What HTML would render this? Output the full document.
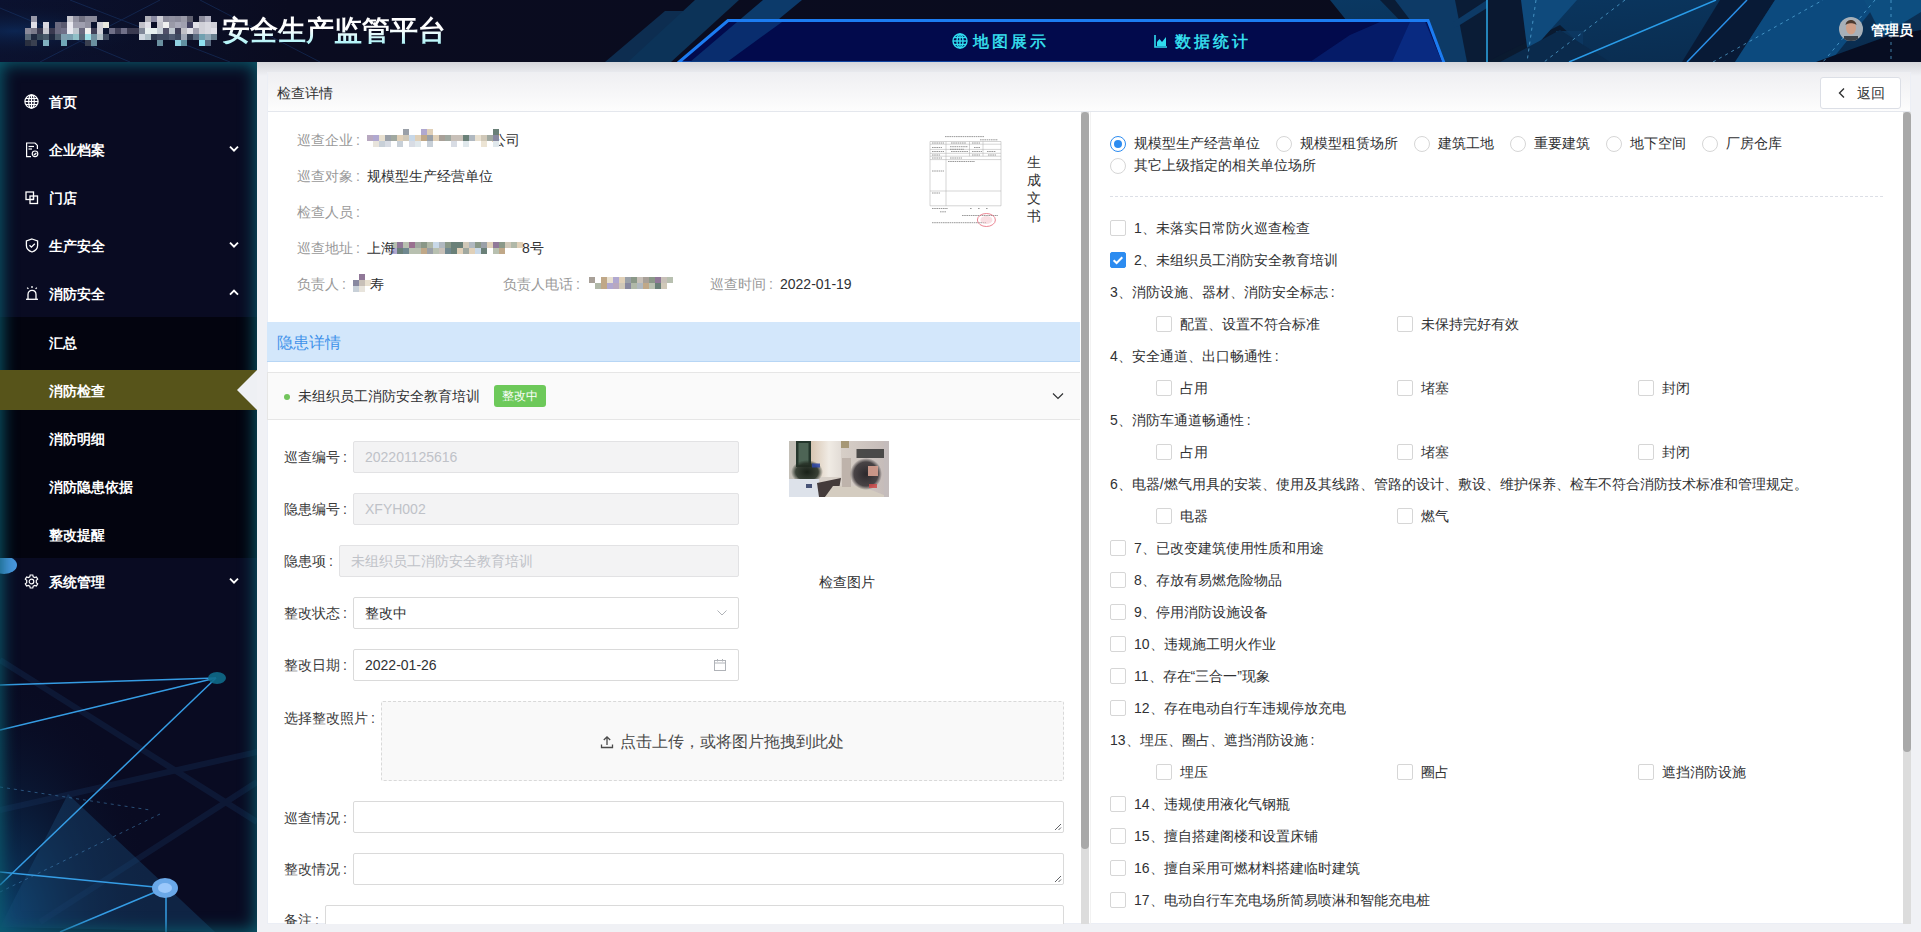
<!DOCTYPE html>
<html><head><meta charset="utf-8">
<style>
*{box-sizing:border-box;margin:0;padding:0}
html,body{width:1921px;height:932px;overflow:hidden;background:#f0f1f5;font-family:"Liberation Sans",sans-serif;font-size:14px;color:#303133}
.a{position:absolute}
#hdr{position:absolute;left:0;top:0;width:1921px;height:62px;background:#0a0c1f;overflow:hidden}
#side{position:absolute;left:0;top:62px;width:257px;height:870px;background:#090b22;overflow:hidden}
.mi{position:absolute;left:0;width:257px;height:40px;line-height:40px;color:#fff;font-size:14px;font-weight:bold}
.mi .t{position:absolute;left:49px;top:1px}
.mi svg{position:absolute}
#card{position:absolute;left:267px;top:72px;width:1644px;height:852px;background:#fff;border:1px solid #ebeef5;border-top-color:#eeeff2}
.lbl{position:absolute;color:#999;font-size:14px;line-height:20px;white-space:nowrap}
.val{position:absolute;color:#303133;font-size:14px;line-height:20px;white-space:nowrap}
.fl{position:absolute;color:#3a3a3a;font-size:14px;line-height:20px;white-space:nowrap}
.inp{position:absolute;height:32px;border:1px solid #dadada;border-radius:2px;background:#fff;font-size:14px;line-height:30px;padding-left:11px;color:#606266;white-space:nowrap}
.inp.dis{background:#f3f3f4;border-color:#e2e2e4;color:#bfc2c8}
.rt{position:absolute;font-size:14px;line-height:20px;color:#606266;white-space:nowrap}
.rd{position:absolute;width:14px;height:14px;border:1px solid #d6d6d6;border-radius:50%;background:#fff}
.cl{display:inline-block;width:14px;padding-left:3px;font-style:normal}
.cb{position:absolute;width:14px;height:14px;border:1px solid #d6d6d6;border-radius:2px;background:#fff}
</style></head><body>

<div id="hdr">
<svg class="a" style="left:0;top:0" width="1921" height="62" viewBox="0 0 1921 62">
 <defs>
  <linearGradient id="hg" x1="0" y1="0" x2="1" y2="0">
   <stop offset="0" stop-color="#0b1230"/><stop offset="0.15" stop-color="#0a0c20"/><stop offset="1" stop-color="#0a0c1c"/>
  </linearGradient>
  <linearGradient id="rg" x1="0" y1="0" x2="1" y2="1">
   <stop offset="0" stop-color="#0a3862"/><stop offset="1" stop-color="#0a2a4c"/>
  </linearGradient>
  <radialGradient id="lg" cx="0.05" cy="0.5" r="0.5">
   <stop offset="0" stop-color="#0c2a5a" stop-opacity="0.8"/><stop offset="1" stop-color="#0a0c20" stop-opacity="0"/>
  </radialGradient>
 </defs>
 <rect width="1921" height="62" fill="url(#hg)"/>
 <rect x="0" y="0" width="300" height="62" fill="url(#lg)"/>
 <g stroke="#1a3a70" stroke-width="1" opacity="0.5" fill="none">
  <line x1="0" y1="8" x2="130" y2="62"/><line x1="70" y1="0" x2="230" y2="62"/><line x1="160" y1="0" x2="40" y2="62"/><line x1="200" y1="0" x2="320" y2="62"/>
 </g>
 <!-- stripes left of nav -->
 <polygon points="605,62 665,11 704,11 645,62" fill="#0d2d50"/>
 <polygon points="628,62 695,0 739,0 671,62" fill="#0c3358"/>
 <polygon points="690,62 763,0 802,0 727,62" fill="#0c3a6a"/>
 <!-- right geometric -->
 <polygon points="1330,0 1921,0 1921,62 1380,62" fill="url(#rg)"/>
 <polygon points="1380,0 1487,0 1487,62 1440,62" fill="#0a1c36"/>
 <polygon points="1395,0 1455,0 1467,62 1442,62" fill="#0d3a66"/>
 <polygon points="1452,23 1487,0 1487,8 1455,28" fill="#0d3a66"/>
 <polygon points="1487,0 1525,0 1530,62 1487,62" fill="#0a1830"/>
 <polygon points="1487,62 1560,25 1600,62" fill="#0a1a30"/>
 <polygon points="1556,31 1583,31 1583,53 1556,53" fill="#0d3a64" opacity="0.8"/>
 <polygon points="1521,0 1577,0 1528,55" fill="#0f4a7c"/>
 <polygon points="1500,62 1560,30 1610,62" fill="#0a2a4c"/>
 <polygon points="1682,62 1720,0 1775,0 1735,62" fill="#081a36"/>
 <polygon points="1735,62 1775,0 1880,0 1830,62" fill="#0c4a7e"/>
 <polygon points="1816,62 1888,36 1921,30 1921,62" fill="#070d22"/>
 <polygon points="1864,0 1921,0 1921,12 1882,36" fill="#0d4e80"/>
 <line x1="1487" y1="0" x2="1487" y2="62" stroke="#2ea8e8" stroke-width="1.5"/>
 <line x1="1569" y1="62" x2="1716" y2="0" stroke="#2a9ce8" stroke-width="1.5"/>
 <line x1="1687" y1="62" x2="1747" y2="0" stroke="#2a8fe8" stroke-width="1.5"/>
 <g stroke="#5ab0e0" stroke-width="1" stroke-dasharray="3,4" opacity="0.7" fill="none">
  <line x1="1536" y1="0" x2="1527" y2="62"/><line x1="1625" y1="0" x2="1544" y2="62"/>
  <line x1="1713" y1="62" x2="1823" y2="0"/><line x1="1891" y1="0" x2="1891" y2="62"/><line x1="1875" y1="0" x2="1823" y2="62"/>
 </g>
 <!-- nav trapezoid -->
 <polygon points="678,63 728,20.5 1428,20.5 1444,63" fill="#020a4c" stroke="#1c7cf2" stroke-width="3"/>
 <polygon points="690,62 737,22 782,22 727,62" fill="#0c3a7a" opacity="0.75"/>
 <polygon points="1310,62 1350,35 1380,22 1426,22 1442,62" fill="#0a2a80" opacity="0.55"/>
 <polygon points="1392,62 1410,22 1425,22 1442,62" fill="#0e3a9a" opacity="0.5"/>
</svg>
<svg class="a" style="left:25px;top:16px" width="192" height="30" viewBox="0 0 192 30" shape-rendering="crispEdges"><rect x="6" y="0" width="6" height="6" fill="#9898a8"/><rect x="42" y="0" width="6" height="6" fill="#c8c8d0"/><rect x="48" y="0" width="6" height="6" fill="#9090a0"/><rect x="54" y="0" width="6" height="6" fill="#707080"/><rect x="60" y="0" width="6" height="6" fill="#8a8a9a"/><rect x="66" y="0" width="6" height="6" fill="#8a8a9a"/><rect x="120" y="0" width="6" height="6" fill="#b0b0b8"/><rect x="126" y="0" width="6" height="6" fill="#8888a0"/><rect x="132" y="0" width="6" height="6" fill="#d0d0d8"/><rect x="138" y="0" width="6" height="6" fill="#8a8a9a"/><rect x="144" y="0" width="6" height="6" fill="#9090a0"/><rect x="150" y="0" width="6" height="6" fill="#8a8a9a"/><rect x="156" y="0" width="6" height="6" fill="#9a9aa8"/><rect x="162" y="0" width="6" height="6" fill="#606070"/><rect x="174" y="0" width="6" height="6" fill="#8a8a9a"/><rect x="180" y="0" width="6" height="6" fill="#b0b0c0"/><rect x="6" y="6" width="6" height="6" fill="#e0e0e8"/><rect x="18" y="6" width="6" height="6" fill="#d8d8e0"/><rect x="30" y="6" width="6" height="6" fill="#6a6a80"/><rect x="36" y="6" width="6" height="6" fill="#5a5a70"/><rect x="42" y="6" width="6" height="6" fill="#e8e8f0"/><rect x="48" y="6" width="6" height="6" fill="#a0a0b0"/><rect x="54" y="6" width="6" height="6" fill="#a0a0b0"/><rect x="60" y="6" width="6" height="6" fill="#9090a0"/><rect x="72" y="6" width="6" height="6" fill="#d0d0d8"/><rect x="78" y="6" width="6" height="6" fill="#e8e8e0"/><rect x="114" y="6" width="6" height="6" fill="#c0c0c8"/><rect x="120" y="6" width="6" height="6" fill="#e0e0e8"/><rect x="132" y="6" width="6" height="6" fill="#c8c8d0"/><rect x="138" y="6" width="6" height="6" fill="#f0f0f0"/><rect x="144" y="6" width="6" height="6" fill="#9a9aa8"/><rect x="150" y="6" width="6" height="6" fill="#a8a8b8"/><rect x="156" y="6" width="6" height="6" fill="#a0a0b0"/><rect x="162" y="6" width="6" height="6" fill="#404060"/><rect x="168" y="6" width="6" height="6" fill="#e0e0e8"/><rect x="174" y="6" width="6" height="6" fill="#d0d0d8"/><rect x="180" y="6" width="6" height="6" fill="#d8d8e0"/><rect x="186" y="6" width="6" height="6" fill="#d0d0d8"/><rect x="0" y="12" width="6" height="6" fill="#8a8a9a"/><rect x="6" y="12" width="6" height="6" fill="#7a7a8a"/><rect x="12" y="12" width="6" height="6" fill="#3a3a50"/><rect x="18" y="12" width="6" height="6" fill="#c8c8d0"/><rect x="24" y="12" width="6" height="6" fill="#3a3a50"/><rect x="30" y="12" width="6" height="6" fill="#6a6a80"/><rect x="36" y="12" width="6" height="6" fill="#707088"/><rect x="42" y="12" width="6" height="6" fill="#e8e8f0"/><rect x="48" y="12" width="6" height="6" fill="#c0c8d0"/><rect x="54" y="12" width="6" height="6" fill="#6a6a80"/><rect x="60" y="12" width="6" height="6" fill="#f0f0f0"/><rect x="66" y="12" width="6" height="6" fill="#404058"/><rect x="72" y="12" width="6" height="6" fill="#d0d0d8"/><rect x="84" y="12" width="6" height="6" fill="#707088"/><rect x="90" y="12" width="6" height="6" fill="#404058"/><rect x="96" y="12" width="6" height="6" fill="#707088"/><rect x="102" y="12" width="6" height="6" fill="#3a3a50"/><rect x="108" y="12" width="6" height="6" fill="#3a3a50"/><rect x="114" y="12" width="6" height="6" fill="#808898"/><rect x="120" y="12" width="6" height="6" fill="#e8f0f0"/><rect x="126" y="12" width="6" height="6" fill="#e8f0f0"/><rect x="132" y="12" width="6" height="6" fill="#c8d0d8"/><rect x="138" y="12" width="6" height="6" fill="#505068"/><rect x="144" y="12" width="6" height="6" fill="#c0c8d0"/><rect x="150" y="12" width="6" height="6" fill="#404058"/><rect x="156" y="12" width="6" height="6" fill="#c0c0c8"/><rect x="162" y="12" width="6" height="6" fill="#e0e0e8"/><rect x="168" y="12" width="6" height="6" fill="#a0a0b0"/><rect x="174" y="12" width="6" height="6" fill="#d0d0d8"/><rect x="180" y="12" width="6" height="6" fill="#d8d8e0"/><rect x="186" y="12" width="6" height="6" fill="#e0e0e8"/><rect x="0" y="18" width="6" height="6" fill="#5a6a7a"/><rect x="6" y="18" width="6" height="6" fill="#202a40"/><rect x="12" y="18" width="6" height="6" fill="#3a4a5a"/><rect x="18" y="18" width="6" height="6" fill="#4a5a6a"/><rect x="24" y="18" width="6" height="6" fill="#202a40"/><rect x="30" y="18" width="6" height="6" fill="#4a5a6a"/><rect x="36" y="18" width="6" height="6" fill="#80a0b0"/><rect x="42" y="18" width="6" height="6" fill="#7aa0b0"/><rect x="48" y="18" width="6" height="6" fill="#90c0c8"/><rect x="54" y="18" width="6" height="6" fill="#5a6a7a"/><rect x="60" y="18" width="6" height="6" fill="#a0e0e8"/><rect x="66" y="18" width="6" height="6" fill="#7090a0"/><rect x="72" y="18" width="6" height="6" fill="#b0c0c8"/><rect x="78" y="18" width="6" height="6" fill="#404a60"/><rect x="114" y="18" width="6" height="6" fill="#d0d8e0"/><rect x="120" y="18" width="6" height="6" fill="#b0c0c8"/><rect x="126" y="18" width="6" height="6" fill="#303a50"/><rect x="132" y="18" width="6" height="6" fill="#404a60"/><rect x="138" y="18" width="6" height="6" fill="#404a60"/><rect x="144" y="18" width="6" height="6" fill="#505a70"/><rect x="150" y="18" width="6" height="6" fill="#404a60"/><rect x="156" y="18" width="6" height="6" fill="#a0a8b8"/><rect x="162" y="18" width="6" height="6" fill="#303a50"/><rect x="168" y="18" width="6" height="6" fill="#5a6a80"/><rect x="174" y="18" width="6" height="6" fill="#70a0b0"/><rect x="180" y="18" width="6" height="6" fill="#90a8b8"/><rect x="186" y="18" width="6" height="6" fill="#6a8090"/><rect x="0" y="24" width="6" height="6" fill="#2a3040"/><rect x="6" y="24" width="6" height="6" fill="#3a4050"/><rect x="18" y="24" width="6" height="6" fill="#80b0c0"/><rect x="36" y="24" width="6" height="6" fill="#70a8b8"/><rect x="60" y="24" width="6" height="6" fill="#3a4050"/><rect x="66" y="24" width="6" height="6" fill="#6a90a0"/><rect x="132" y="24" width="6" height="6" fill="#6a90a0"/><rect x="150" y="24" width="6" height="6" fill="#90d0e0"/><rect x="156" y="24" width="6" height="6" fill="#6090a0"/><rect x="174" y="24" width="6" height="6" fill="#90e0f0"/><rect x="180" y="24" width="6" height="6" fill="#5a6a80"/></svg>
<div class="a" style="left:222px;top:11px;font-size:28px;line-height:40px;font-weight:bold;white-space:nowrap;background:linear-gradient(180deg,#ffffff 0,#ffffff 45%,#a6f2f6 85%,#a6f2f6 100%);-webkit-background-clip:text;background-clip:text;color:transparent">安全生产监管平台</div>
<svg class="a" style="left:952px;top:33px" width="16" height="16" viewBox="0 0 16 16" fill="none" stroke="#30dcf0" stroke-width="1.4"><circle cx="8" cy="8" r="7"/><ellipse cx="8" cy="8" rx="3" ry="7"/><line x1="1" y1="8" x2="15" y2="8"/><line x1="2" y1="4.5" x2="14" y2="4.5"/><line x1="2" y1="11.5" x2="14" y2="11.5"/><line x1="8" y1="1" x2="8" y2="15"/></svg>
<div class="a" style="left:973px;top:31px;font-size:16px;line-height:22px;color:#3ae8f6;letter-spacing:3px;white-space:nowrap;-webkit-text-stroke:0.4px #3ae8f6">地图展示</div>
<svg class="a" style="left:1154px;top:34px" width="14" height="14" viewBox="0 0 14 14"><path d="M1 1V13H13" stroke="#30dcf0" stroke-width="1.6" fill="none"/><path d="M3 12V8L5.5 5L8 8L12 3V12Z" fill="#30dcf0"/></svg>
<div class="a" style="left:1175px;top:31px;font-size:16px;line-height:22px;color:#3ae8f6;letter-spacing:3px;white-space:nowrap;-webkit-text-stroke:0.4px #3ae8f6">数据统计</div>
<svg class="a" style="left:1839px;top:17px" width="24" height="24" viewBox="0 0 24 24"><defs><clipPath id="av"><circle cx="12" cy="12" r="12"/></clipPath></defs><g clip-path="url(#av)"><rect width="24" height="24" fill="#a8b0b8"/><ellipse cx="12" cy="11" rx="5" ry="6.5" fill="#d0a088"/><path d="M6.5 8C7 4 10 3 12 3C14.5 3 17 4.5 17.5 8L16 7C14 6 10 6 8 7Z" fill="#4a3a30"/><rect x="5" y="19" width="14" height="6" fill="#3a4048"/></g></svg>
<div class="a" style="left:1871px;top:19px;font-size:14px;line-height:22px;color:#fff;font-weight:bold;white-space:nowrap">管理员</div>
</div>
<div class="a" style="left:257px;top:62px;width:1664px;height:14px;background:linear-gradient(#d5d6db,#f0f1f5)"></div>
<div id="side">
<svg class="a" style="left:0;top:0" width="257" height="870" viewBox="0 0 257 870">
 <defs>
  <radialGradient id="sbg" cx="0" cy="1" r="0.6">
   <stop offset="0" stop-color="#0d4f80" stop-opacity="0.9"/><stop offset="1" stop-color="#0a0b22" stop-opacity="0"/>
  </radialGradient>
 </defs>
 <rect x="0" y="440" width="257" height="430" fill="url(#sbg)"/>
 <g stroke="#1a3a68" stroke-width="6" opacity="0.28" fill="none">
  <line x1="0" y1="598" x2="257" y2="760"/><line x1="0" y1="748" x2="257" y2="690"/><line x1="40" y1="860" x2="257" y2="720"/>
 </g>
 <polygon points="0,865 68,732 215,870" fill="#1a4a78" opacity="0.4"/>
 <g stroke="#38a4ee" stroke-width="1.5" fill="none" opacity="0.95">
  <line x1="0" y1="623" x2="216" y2="616"/><line x1="0" y1="668" x2="216" y2="616"/><line x1="0" y1="823" x2="216" y2="616"/>
  <line x1="0" y1="810" x2="165" y2="826"/><line x1="60" y1="870" x2="165" y2="826"/><line x1="166" y1="826" x2="166" y2="870"/>
 </g>
 <g stroke="#4a90c8" stroke-width="1" stroke-dasharray="3,4" opacity="0.5" fill="none">
  <line x1="0" y1="725" x2="150" y2="748"/><line x1="0" y1="830" x2="160" y2="752"/>
 </g>
 <ellipse cx="217" cy="616" rx="9" ry="6" fill="#0f6a8a" opacity="0.9"/>
 <ellipse cx="165" cy="826" rx="13" ry="10" fill="#6aa8e8"/>
 <ellipse cx="165" cy="826" rx="7" ry="5" fill="#a8d0ff" opacity="0.8"/>
 <ellipse cx="4" cy="503" rx="13" ry="9" fill="#4a98e0"/>
</svg>
<div class="mi" style="top:19px"><svg style="left:24px;top:13px" width="15" height="15" viewBox="0 0 15 15" fill="none" stroke="#fff" stroke-width="1.2"><circle cx="7.5" cy="7.5" r="6.6"/><ellipse cx="7.5" cy="7.5" rx="2.8" ry="6.6"/><line x1="1" y1="7.5" x2="14" y2="7.5"/><line x1="2" y1="4.5" x2="13" y2="4.5"/><line x1="2" y1="10.5" x2="13" y2="10.5"/><line x1="7.5" y1="1" x2="7.5" y2="14"/></svg><span class="t">首页</span></div>
<div class="mi" style="top:67px"><svg style="left:25px;top:13px" width="14" height="16" viewBox="0 0 14 16" fill="none" stroke="#fff" stroke-width="1.2"><path d="M10 1H1.6V14.6H6"/><path d="M10 1L12.4 3.4V7"/><line x1="3.5" y1="4.5" x2="9" y2="4.5"/><line x1="3.5" y1="7" x2="7" y2="7"/><circle cx="10" cy="11.8" r="2.8"/><path d="M8.8 11.8L9.7 12.7L11.3 11"/></svg><span class="t">企业档案</span><svg style="left:229px;top:15px" width="10" height="10" viewBox="0 0 10 10"><path d="M1 2.6L5 6.6L9 2.6" stroke="#fff" stroke-width="1.9" fill="none"/></svg></div>
<div class="mi" style="top:115px"><svg style="left:25px;top:14px" width="14" height="14" viewBox="0 0 14 14" fill="none" stroke="#fff" stroke-width="1.3"><rect x="1" y="1" width="7.5" height="7.5"/><rect x="5" y="5" width="7.5" height="7.5"/><line x1="5" y1="8.5" x2="8.5" y2="8.5"/><line x1="8.5" y1="5" x2="8.5" y2="8.5"/></svg><span class="t">门店</span></div>
<div class="mi" style="top:163px"><svg style="left:25px;top:13px" width="14" height="15" viewBox="0 0 14 15" fill="none" stroke="#fff" stroke-width="1.3"><path d="M7 1L12.6 3V7.5C12.6 10.8 10 13 7 14C4 13 1.4 10.8 1.4 7.5V3Z"/><path d="M4.5 7.3L6.4 9.2L9.8 5.8"/></svg><span class="t">生产安全</span><svg style="left:229px;top:15px" width="10" height="10" viewBox="0 0 10 10"><path d="M1 2.6L5 6.6L9 2.6" stroke="#fff" stroke-width="1.9" fill="none"/></svg></div>
<div class="mi" style="top:211px"><svg style="left:25px;top:12px" width="14" height="16" viewBox="0 0 14 16" fill="none" stroke="#fff" stroke-width="1.3"><path d="M3 14V9.5C3 7 4.8 5.3 7 5.3C9.2 5.3 11 7 11 9.5V14"/><line x1="1" y1="14.3" x2="13" y2="14.3"/><line x1="7" y1="1" x2="7" y2="3"/><line x1="2.2" y1="2.6" x2="3.4" y2="3.9"/><line x1="11.8" y1="2.6" x2="10.6" y2="3.9"/></svg><span class="t">消防安全</span><svg style="left:229px;top:15px" width="10" height="10" viewBox="0 0 10 10"><path d="M1 6.6L5 2.6L9 6.6" stroke="#fff" stroke-width="1.9" fill="none"/></svg></div>
<div class="a" style="left:0;top:255px;width:257px;height:241px;background:#03040f"></div>
<div class="mi" style="top:260px"><span class="t">汇总</span></div>
<div class="a" style="left:0;top:0;width:257px;height:870px;box-shadow:inset 0 0 16px 2px #0b5d6e;pointer-events:none"></div>
<div class="mi" style="top:308px;background:#57541a"><span class="t">消防检查</span></div>
<svg class="a" style="left:237px;top:308px" width="20" height="40" viewBox="0 0 20 40"><polygon points="20,0 0,20 20,40" fill="#eef0f4"/></svg>
<div class="mi" style="top:356px"><span class="t">消防明细</span></div>
<div class="mi" style="top:404px"><span class="t">消防隐患依据</span></div>
<div class="mi" style="top:452px"><span class="t">整改提醒</span></div>
<div class="mi" style="top:499px"><svg style="left:24px;top:13px" width="15" height="15" viewBox="0 0 15 15" fill="none" stroke="#fff" stroke-width="1.2"><path d="M6.2 1H8.8L9.2 2.8L10.7 3.6L12.4 2.9L13.7 5.1L12.3 6.3V8.7L13.7 9.9L12.4 12.1L10.7 11.4L9.2 12.2L8.8 14H6.2L5.8 12.2L4.3 11.4L2.6 12.1L1.3 9.9L2.7 8.7V6.3L1.3 5.1L2.6 2.9L4.3 3.6L5.8 2.8Z"/><circle cx="7.5" cy="7.5" r="2.3"/></svg><span class="t">系统管理</span><svg style="left:229px;top:15px" width="10" height="10" viewBox="0 0 10 10"><path d="M1 2.6L5 6.6L9 2.6" stroke="#fff" stroke-width="1.9" fill="none"/></svg></div>

</div>
<div id="card">
<div class="a" style="left:0;top:0;width:1642px;height:38px;background:linear-gradient(#efeff2,#fdfdfd)"></div>
<div class="a" style="left:0;top:38px;width:1642px;height:1px;background:#e4e7ed"></div>
<div class="val" style="left:9px;top:10px;color:#303133">检查详情</div>
<div class="a" style="left:1552px;top:4px;width:81px;height:32px;border:1px solid #dcdfe6;border-radius:3px;background:#fff"></div>
<svg class="a" style="left:1569px;top:14px" width="10" height="12" viewBox="0 0 10 12"><path d="M7 1.5L2.5 6L7 10.5" stroke="#303133" stroke-width="1.4" fill="none"/></svg>
<div class="val" style="left:1589px;top:10px">返回</div>
<div class="a" style="left:813px;top:39px;width:8px;height:812px;background:#dcdcdc"></div>
<div class="a" style="left:813px;top:39px;width:8px;height:737px;background:#a8a8a8;border-radius:4px"></div>
<div class="a" style="left:822px;top:39px;width:1px;height:812px;background:#f2f2f2"></div>
<div class="a" style="left:1635px;top:39px;width:8px;height:812px;background:#dcdcdc"></div>
<div class="a" style="left:1635px;top:39px;width:8px;height:640px;background:#a8a8a8;border-radius:4px"></div>


</div>

<div id="leftc" class="a" style="left:0;top:0;width:1921px;height:932px;clip-path:inset(112px 841px 8px 267px)">
<div class="lbl" style="left:297px;top:130px;">巡查企业<i class="cl">:</i></div>
<div class="lbl" style="left:297px;top:166px;">巡查对象<i class="cl">:</i></div>
<div class="lbl" style="left:297px;top:202px;">检查人员<i class="cl">:</i></div>
<div class="lbl" style="left:297px;top:238px;">巡查地址<i class="cl">:</i></div>
<div class="lbl" style="left:297px;top:274px;">负责人<i class="cl">:</i></div>
<div class="lbl" style="left:503px;top:274px;">负责人电话<i class="cl">:</i></div>
<div class="lbl" style="left:710px;top:274px;">巡查时间<i class="cl">:</i></div>
<div class="val" style="left:492px;top:130px;">公司</div><svg class="a" style="left:367px;top:129px" width="140px" height="18px" viewBox="0 0 140 18" shape-rendering="crispEdges"><rect x="36" y="0" width="6" height="6" fill="#9aa0a8"/><rect x="54" y="0" width="6" height="6" fill="#b0a8d0"/><rect x="60" y="0" width="6" height="6" fill="#e0d0b8"/><rect x="126" y="0" width="6" height="6" fill="#6a8078"/><rect x="0" y="6" width="6" height="6" fill="#b8a8c0"/><rect x="6" y="6" width="6" height="6" fill="#b0a8d0"/><rect x="12" y="6" width="6" height="6" fill="#e8e0d0"/><rect x="18" y="6" width="6" height="6" fill="#9aa0a8"/><rect x="24" y="6" width="6" height="6" fill="#a0a8a0"/><rect x="30" y="6" width="6" height="6" fill="#e0d0b8"/><rect x="36" y="6" width="6" height="6" fill="#d0c8b8"/><rect x="42" y="6" width="6" height="6" fill="#c8d8e8"/><rect x="48" y="6" width="6" height="6" fill="#e0d0b8"/><rect x="54" y="6" width="6" height="6" fill="#c0a888"/><rect x="60" y="6" width="6" height="6" fill="#9aa0a8"/><rect x="66" y="6" width="6" height="6" fill="#e0d0b8"/><rect x="72" y="6" width="6" height="6" fill="#a8a098"/><rect x="78" y="6" width="6" height="6" fill="#a0a8a0"/><rect x="84" y="6" width="6" height="6" fill="#c8c0b8"/><rect x="90" y="6" width="6" height="6" fill="#c8c0b8"/><rect x="96" y="6" width="6" height="6" fill="#6a8078"/><rect x="102" y="6" width="6" height="6" fill="#b0b8c0"/><rect x="108" y="6" width="6" height="6" fill="#e8e0d0"/><rect x="114" y="6" width="6" height="6" fill="#d0c8b8"/><rect x="120" y="6" width="6" height="6" fill="#a0a8a0"/><rect x="126" y="6" width="6" height="6" fill="#8888a0"/><rect x="6" y="12" width="6" height="6" fill="#e8e4dc"/><rect x="12" y="12" width="6" height="6" fill="#c8d0d8"/><rect x="18" y="12" width="6" height="6" fill="#d8dce4"/><rect x="30" y="12" width="6" height="6" fill="#c8d0d8"/><rect x="42" y="12" width="6" height="6" fill="#d8dce4"/><rect x="48" y="12" width="6" height="6" fill="#e0e8ec"/><rect x="60" y="12" width="6" height="6" fill="#c8d0d8"/><rect x="84" y="12" width="6" height="6" fill="#d8dce4"/><rect x="96" y="12" width="6" height="6" fill="#e0e8ec"/><rect x="114" y="12" width="6" height="6" fill="#ece4d4"/><rect x="126" y="12" width="6" height="6" fill="#e0e8ec"/></svg><svg class="a" style="left:391px;top:242px" width="132px" height="13px" viewBox="0 0 132 13" shape-rendering="crispEdges"><rect x="0" y="0" width="6" height="6" fill="#b8c0b0"/><rect x="6" y="0" width="6" height="6" fill="#907898"/><rect x="12" y="0" width="6" height="6" fill="#b8c0b0"/><rect x="18" y="0" width="6" height="6" fill="#9a7090"/><rect x="24" y="0" width="6" height="6" fill="#a0a8a0"/><rect x="30" y="0" width="6" height="6" fill="#8a9888"/><rect x="36" y="0" width="6" height="6" fill="#b0b8a8"/><rect x="42" y="0" width="6" height="6" fill="#c8d8e8"/><rect x="48" y="0" width="6" height="6" fill="#b0b8c0"/><rect x="54" y="0" width="6" height="6" fill="#8a9888"/><rect x="60" y="0" width="6" height="6" fill="#6a8078"/><rect x="66" y="0" width="6" height="6" fill="#6a8078"/><rect x="72" y="0" width="6" height="6" fill="#d0c8b8"/><rect x="78" y="0" width="6" height="6" fill="#b0b8c0"/><rect x="84" y="0" width="6" height="6" fill="#8a9888"/><rect x="90" y="0" width="6" height="6" fill="#9aa0a8"/><rect x="96" y="0" width="6" height="6" fill="#e0d0b8"/><rect x="102" y="0" width="6" height="6" fill="#907898"/><rect x="108" y="0" width="6" height="6" fill="#8a9888"/><rect x="114" y="0" width="6" height="6" fill="#d0c8b8"/><rect x="120" y="0" width="6" height="6" fill="#b0b8a8"/><rect x="126" y="0" width="6" height="6" fill="#e0d0b8"/><rect x="0" y="6" width="6" height="6" fill="#b0a8d0"/><rect x="6" y="6" width="6" height="6" fill="#6a8078"/><rect x="12" y="6" width="6" height="6" fill="#708890"/><rect x="18" y="6" width="6" height="6" fill="#b8c0b0"/><rect x="24" y="6" width="6" height="6" fill="#b8c0b0"/><rect x="30" y="6" width="6" height="6" fill="#c0a888"/><rect x="36" y="6" width="6" height="6" fill="#9aa0a8"/><rect x="42" y="6" width="6" height="6" fill="#b8c0b0"/><rect x="48" y="6" width="6" height="6" fill="#c8c0b8"/><rect x="54" y="6" width="6" height="6" fill="#708890"/><rect x="60" y="6" width="6" height="6" fill="#6a8078"/><rect x="66" y="6" width="6" height="6" fill="#e0d0b8"/><rect x="72" y="6" width="6" height="6" fill="#a0a8a0"/><rect x="78" y="6" width="6" height="6" fill="#e0d0b8"/><rect x="84" y="6" width="6" height="6" fill="#c8d8e8"/><rect x="90" y="6" width="6" height="6" fill="#6a8078"/><rect x="102" y="6" width="6" height="6" fill="#b8c0b0"/><rect x="108" y="6" width="6" height="6" fill="#c0a888"/></svg><svg class="a" style="left:353px;top:274px" width="20px" height="18px" viewBox="0 0 20 18" shape-rendering="crispEdges"><rect x="6" y="0" width="6" height="6" fill="#907898"/><rect x="0" y="6" width="6" height="6" fill="#8888a0"/><rect x="6" y="6" width="6" height="6" fill="#c8c0b8"/><rect x="12" y="6" width="6" height="6" fill="#e8e0d0"/><rect x="0" y="12" width="6" height="6" fill="#c8d0d8"/><rect x="6" y="12" width="6" height="6" fill="#e8e4dc"/></svg><svg class="a" style="left:589px;top:277px" width="85px" height="14px" viewBox="0 0 85 14" shape-rendering="crispEdges"><rect x="0" y="0" width="6" height="6" fill="#a8a098"/><rect x="12" y="0" width="6" height="6" fill="#c0a888"/><rect x="18" y="0" width="6" height="6" fill="#e8e0d0"/><rect x="24" y="0" width="6" height="6" fill="#b0a8d0"/><rect x="30" y="0" width="6" height="6" fill="#e0d0b8"/><rect x="36" y="0" width="6" height="6" fill="#9aa0a8"/><rect x="42" y="0" width="6" height="6" fill="#8a9888"/><rect x="48" y="0" width="6" height="6" fill="#c8c0b8"/><rect x="54" y="0" width="6" height="6" fill="#a8a098"/><rect x="60" y="0" width="6" height="6" fill="#8a9888"/><rect x="66" y="0" width="6" height="6" fill="#907898"/><rect x="72" y="0" width="6" height="6" fill="#c8c0b8"/><rect x="78" y="0" width="6" height="6" fill="#b8c0b0"/><rect x="6" y="6" width="6" height="6" fill="#b0b8a8"/><rect x="12" y="6" width="6" height="6" fill="#c0a888"/><rect x="18" y="6" width="6" height="6" fill="#b0a8d0"/><rect x="24" y="6" width="6" height="6" fill="#b8a8c0"/><rect x="30" y="6" width="6" height="6" fill="#d0c8b8"/><rect x="36" y="6" width="6" height="6" fill="#8888a0"/><rect x="42" y="6" width="6" height="6" fill="#b0b8a8"/><rect x="48" y="6" width="6" height="6" fill="#b0b8c0"/><rect x="54" y="6" width="6" height="6" fill="#c0a888"/><rect x="60" y="6" width="6" height="6" fill="#b8c0b0"/><rect x="66" y="6" width="6" height="6" fill="#6a8078"/><rect x="72" y="6" width="6" height="6" fill="#d0c8b8"/></svg>
<div class="val" style="left:367px;top:166px;">规模型生产经营单位</div>
<div class="val" style="left:367px;top:238px;">上海</div>
<div class="val" style="left:522px;top:238px;">8号</div>
<div class="val" style="left:370px;top:274px;">寿</div>
<div class="val" style="left:780px;top:274px;">2022-01-19</div>
<svg class="a" style="left:928px;top:131px" width="76" height="100" viewBox="0 0 76 100"><g stroke="#a8a8a8" stroke-width="0.5" fill="none"><line x1="2" y1="10.5" x2="73" y2="10.5"/><line x1="2" y1="13.2" x2="73" y2="13.2"/><line x1="2" y1="18.4" x2="73" y2="18.4"/><line x1="2" y1="22.3" x2="73" y2="22.3"/><line x1="2" y1="25.2" x2="73" y2="25.2"/><line x1="2" y1="28.6" x2="73" y2="28.6"/><line x1="2" y1="60" x2="73" y2="60"/><line x1="2" y1="74.8" x2="73" y2="74.8"/><line x1="2" y1="10.5" x2="2" y2="74.8"/><line x1="18" y1="10.5" x2="18" y2="74.8"/><line x1="41.5" y1="10.5" x2="41.5" y2="25.2"/><line x1="55" y1="10.5" x2="55" y2="25.2"/><line x1="73" y1="10.5" x2="73" y2="74.8"/></g><g stroke="#808080" stroke-width="0.8" fill="none"><line x1="17" y1="5.6" x2="56" y2="5.6" stroke-dasharray="1.6,0.6"/><line x1="52" y1="8.8" x2="70" y2="8.8" stroke-dasharray="1.6,0.6"/><line x1="4" y1="12" x2="16" y2="12" stroke-dasharray="1.6,0.6"/><line x1="23" y1="12" x2="38" y2="12" stroke-dasharray="1.6,0.6"/><line x1="44" y1="12" x2="52" y2="12" stroke-dasharray="1.6,0.6"/><line x1="4" y1="16.5" x2="14" y2="16.5" stroke-dasharray="1.6,0.6"/><line x1="22" y1="15.7" x2="40" y2="15.7" stroke-dasharray="1.6,0.6"/><line x1="22" y1="18.3" x2="36" y2="18.3" stroke-dasharray="1.6,0.6"/><line x1="46" y1="16.5" x2="52" y2="16.5" stroke-dasharray="1.6,0.6"/><line x1="4" y1="20.5" x2="16" y2="20.5" stroke-dasharray="1.6,0.6"/><line x1="23" y1="20.5" x2="40" y2="20.5" stroke-dasharray="1.6,0.6"/><line x1="44" y1="20.5" x2="54" y2="20.5" stroke-dasharray="1.6,0.6"/><line x1="59" y1="20.5" x2="68" y2="20.5" stroke-dasharray="1.6,0.6"/><line x1="4" y1="24" x2="12" y2="24" stroke-dasharray="1.6,0.6"/><line x1="44" y1="24" x2="52" y2="24" stroke-dasharray="1.6,0.6"/><line x1="60" y1="24" x2="68" y2="24" stroke-dasharray="1.6,0.6"/><line x1="4" y1="27" x2="14" y2="27" stroke-dasharray="1.6,0.6"/><line x1="22" y1="27" x2="34" y2="27" stroke-dasharray="1.6,0.6"/><line x1="20" y1="30.5" x2="47" y2="30.5" stroke-dasharray="1.6,0.6"/><line x1="4" y1="40" x2="16" y2="40" stroke-dasharray="1.6,0.6"/><line x1="4" y1="62" x2="12" y2="62" stroke-dasharray="1.6,0.6"/><line x1="4" y1="77.5" x2="20" y2="77.5" stroke-dasharray="1.6,0.6"/><line x1="42" y1="77.5" x2="44" y2="77.5" stroke-dasharray="1.6,0.6"/><line x1="50" y1="77.5" x2="52" y2="77.5" stroke-dasharray="1.6,0.6"/><line x1="58" y1="77.5" x2="60" y2="77.5" stroke-dasharray="1.6,0.6"/><line x1="12" y1="80.8" x2="18" y2="80.8" stroke-dasharray="1.6,0.6"/><line x1="34" y1="84.5" x2="70" y2="84.5" stroke-dasharray="1.6,0.6"/><line x1="4" y1="91.7" x2="58" y2="91.7" stroke-dasharray="1.6,0.6"/></g><ellipse cx="58.4" cy="89" rx="9" ry="6.5" fill="none" stroke="#e87080" stroke-width="1" opacity="0.85"/><ellipse cx="58.4" cy="89" rx="6" ry="4" fill="#f4c0c8" opacity="0.5"/></svg>
<div class="val" style="left:1027px;top:152px;color:#333">生</div>
<div class="val" style="left:1027px;top:170px;color:#333">成</div>
<div class="val" style="left:1027px;top:188px;color:#333">文</div>
<div class="val" style="left:1027px;top:206px;color:#333">书</div>
<div class="a" style="left:267px;top:322px;width:814px;height:40px;background:#d3e7fb;border-bottom:1px solid #b7d6f5"></div>
<div class="a" style="left:277px;top:333px;font-size:16px;line-height:20px;color:#3f92ea;white-space:nowrap">隐患详情</div>
<div class="a" style="left:267px;top:372px;width:814px;height:48px;background:#fafafa;border-top:1px solid #e6e6e6;border-bottom:1px solid #e6e6e6;border-left:1px solid #e6e6e6"></div>
<div class="a" style="left:284px;top:394px;width:6px;height:6px;border-radius:50%;background:#72c45c"></div>
<div class="val" style="left:298px;top:386px;">未组织员工消防安全教育培训</div>
<div class="a" style="left:494px;top:385px;width:52px;height:22px;border-radius:3px;background:#6dc95a;color:#fff;font-size:12px;line-height:22px;text-align:center">整改中</div>
<svg class="a" style="left:1052px;top:391px" width="12" height="10" viewBox="0 0 12 10"><path d="M1 2.5L6 7.5L11 2.5" stroke="#303133" stroke-width="1.2" fill="none"/></svg>
<div class="a" style="left:267px;top:420px;width:1px;height:504px;background:#ebeef5"></div>
<div class="fl" style="left:284px;top:447px;">巡查编号<i class="cl">:</i></div>
<div class="inp dis" style="left:353px;top:441px;width:386px;height:32px;">202201125616</div>
<div class="fl" style="left:284px;top:499px;">隐患编号<i class="cl">:</i></div>
<div class="inp dis" style="left:353px;top:493px;width:386px;height:32px;">XFYH002</div>
<div class="fl" style="left:284px;top:551px;">隐患项<i class="cl">:</i></div>
<div class="inp dis" style="left:339px;top:545px;width:400px;height:32px;">未组织员工消防安全教育培训</div>
<div class="fl" style="left:284px;top:603px;">整改状态<i class="cl">:</i></div>
<div class="inp" style="left:353px;top:597px;width:386px;height:32px;color:#303133">整改中</div>
<svg class="a" style="left:716px;top:608px" width="12" height="10" viewBox="0 0 12 10"><path d="M1.5 2.5L6 7L10.5 2.5" stroke="#b0b3b8" stroke-width="1" fill="none"/></svg>
<div class="fl" style="left:284px;top:655px;">整改日期<i class="cl">:</i></div>
<div class="inp" style="left:353px;top:649px;width:386px;height:32px;color:#303133">2022-01-26</div>
<svg class="a" style="left:713px;top:658px" width="14" height="14" viewBox="0 0 14 14" fill="none" stroke="#b0b3b8" stroke-width="1"><rect x="1.5" y="2.5" width="11" height="10"/><line x1="1.5" y1="5" x2="12.5" y2="5"/><line x1="4.5" y1="1" x2="4.5" y2="3.5"/><line x1="9.5" y1="1" x2="9.5" y2="3.5"/></svg>
<div class="a" style="left:789px;top:441px;width:100px;height:56px;overflow:hidden"><svg class="a" style="left:0;top:0" width="100" height="56" viewBox="0 0 100 56">
<defs>
<linearGradient id="ph" x1="0" y1="0" x2="1" y2="0"><stop offset="0" stop-color="#d8d2ca"/><stop offset="0.5" stop-color="#d8d0c8"/><stop offset="1" stop-color="#c4bab8"/></linearGradient>
<radialGradient id="pl" cx="0.5" cy="0.5" r="0.5"><stop offset="0" stop-color="#182018"/><stop offset="0.7" stop-color="#263026" stop-opacity="0.9"/><stop offset="1" stop-color="#263026" stop-opacity="0"/></radialGradient>
<radialGradient id="ch" cx="0.5" cy="0.5" r="0.5"><stop offset="0" stop-color="#2c282c"/><stop offset="0.75" stop-color="#3a3538" stop-opacity="0.9"/><stop offset="1" stop-color="#3a3538" stop-opacity="0"/></radialGradient>
<linearGradient id="wd" x1="0" y1="0" x2="1" y2="0"><stop offset="0" stop-color="#d8c6b2"/><stop offset="0.6" stop-color="#f0ebe4"/><stop offset="1" stop-color="#e2dcd6"/></linearGradient>
</defs>
<rect width="100" height="56" fill="url(#ph)"/>
<rect x="0" y="0" width="7" height="40" fill="#c4c0b8"/>
<rect x="22" y="0" width="30" height="36" fill="url(#wd)"/>
<rect x="7" y="0" width="15" height="26" fill="#24362c"/>
<rect x="9.5" y="2" width="10" height="22" fill="#587060" opacity="0.8"/>
<ellipse cx="18" cy="31" rx="16" ry="12" fill="url(#pl)"/>
<rect x="23" y="22.5" width="8" height="4" fill="#3048a8" opacity="0.85"/>
<polygon points="0,38 30,38 32,56 0,56" fill="#dde2ea"/>
<rect x="17" y="43" width="6" height="4" fill="#22305a" opacity="0.8"/>
<polygon points="28,42 52,37 50,48 36,56 30,56" fill="#342a2a" opacity="0.9"/>
<polygon points="36,56 44,45 72,45 100,56" fill="#d4ccc0"/>
<rect x="52" y="0" width="8" height="7" fill="#9a8a60" opacity="0.8"/>
<rect x="53" y="17" width="9" height="29" fill="#b8aca4" opacity="0.8"/>
<rect x="67.5" y="8" width="27.5" height="9" fill="#3c3c3c" opacity="0.9"/>
<ellipse cx="77" cy="33" rx="16" ry="16" fill="url(#ch)"/>
<rect x="79" y="25" width="10" height="10" fill="#d8a090" opacity="0.9"/>
<rect x="80" y="43" width="8" height="4" fill="#cc4a4a" opacity="0.85"/>
<rect x="95" y="0" width="5" height="56" fill="#c4bcbc"/>
</svg></div>
<div class="val" style="left:819px;top:572px;">检查图片</div>
<div class="fl" style="left:284px;top:708px;">选择整改照片<i class="cl">:</i></div>
<div class="a" style="left:381px;top:701px;width:683px;height:80px;background:#f9f9f9;border:1px dashed #d9d9d9;border-radius:2px"></div>
<svg class="a" style="left:600px;top:735px" width="14" height="14" viewBox="0 0 14 14" fill="none" stroke="#4a4a4a" stroke-width="1.3"><path d="M7 10V2M3.8 5L7 1.8L10.2 5"/><path d="M1.5 9.5V12.5H12.5V9.5"/></svg>
<div class="a" style="left:620px;top:732px;font-size:16px;line-height:20px;color:#4a4a4a;white-space:nowrap">点击上传，或将图片拖拽到此处</div>
<div class="fl" style="left:284px;top:808px;">巡查情况<i class="cl">:</i></div>
<div class="inp" style="left:353px;top:801px;width:711px;height:32px"></div>
<svg class="a" style="left:1054px;top:823px" width="8" height="8" viewBox="0 0 8 8" stroke="#606266" stroke-width="1"><line x1="1" y1="7" x2="7" y2="1"/><line x1="4.5" y1="7" x2="7" y2="4.5"/></svg>
<div class="fl" style="left:284px;top:859px;">整改情况<i class="cl">:</i></div>
<div class="inp" style="left:353px;top:853px;width:711px;height:32px"></div>
<svg class="a" style="left:1054px;top:875px" width="8" height="8" viewBox="0 0 8 8" stroke="#606266" stroke-width="1"><line x1="1" y1="7" x2="7" y2="1"/><line x1="4.5" y1="7" x2="7" y2="4.5"/></svg>
<div class="fl" style="left:284px;top:910px;">备注<i class="cl">:</i></div>
<div class="inp" style="left:325px;top:905px;width:739px;height:40px"></div>
</div>
<div id="rightc" class="a" style="left:0;top:0;width:1921px;height:932px;clip-path:inset(112px 18px 8px 1090px)">
<div class="rd" style="left:1110px;top:136px;width:16px;height:16px;border-color:#2d8cf0"></div>
<div class="a" style="left:1114px;top:140px;width:8px;height:8px;border-radius:50%;background:#2d8cf0"></div>
<div class="rt" style="left:1134px;top:133px;color:#303133">规模型生产经营单位</div>
<div class="rd" style="left:1276px;top:136px;width:16px;height:16px"></div>
<div class="rt" style="left:1300px;top:133px;color:#303133">规模型租赁场所</div>
<div class="rd" style="left:1414px;top:136px;width:16px;height:16px"></div>
<div class="rt" style="left:1438px;top:133px;color:#303133">建筑工地</div>
<div class="rd" style="left:1510px;top:136px;width:16px;height:16px"></div>
<div class="rt" style="left:1534px;top:133px;color:#303133">重要建筑</div>
<div class="rd" style="left:1606px;top:136px;width:16px;height:16px"></div>
<div class="rt" style="left:1630px;top:133px;color:#303133">地下空间</div>
<div class="rd" style="left:1702px;top:136px;width:16px;height:16px"></div>
<div class="rt" style="left:1726px;top:133px;color:#303133">厂房仓库</div>
<div class="rd" style="left:1110px;top:158px;width:16px;height:16px"></div>
<div class="rt" style="left:1134px;top:155px;color:#303133">其它上级指定的相关单位场所</div>
<div class="a" style="left:1110px;top:196px;width:773px;height:1px;background:repeating-linear-gradient(90deg,#dcdfe6 0 3px,transparent 3px 5px)"></div>
<div class="cb" style="left:1110px;top:220px;width:16px;height:16px"></div>
<div class="rt" style="left:1134px;top:218px;color:#303133">1、未落实日常防火巡查检查</div>
<div class="cb" style="left:1110px;top:252px;width:16px;height:16px;background:#2d8cf0;border-color:#2d8cf0"></div>
<svg class="a" style="left:1110px;top:252px" width="16" height="16" viewBox="0 0 16 16"><path d="M3.6 8.2L6.6 11L12.3 5.3" stroke="#fff" stroke-width="2" fill="none"/></svg>
<div class="rt" style="left:1134px;top:250px;color:#303133">2、未组织员工消防安全教育培训</div>
<div class="rt" style="left:1110px;top:282px;color:#303133">3、消防设施、器材、消防安全标志<i class="cl">:</i></div>
<div class="cb" style="left:1156px;top:316px;width:16px;height:16px"></div>
<div class="rt" style="left:1180px;top:314px;color:#303133">配置、设置不符合标准</div>
<div class="cb" style="left:1397px;top:316px;width:16px;height:16px"></div>
<div class="rt" style="left:1421px;top:314px;color:#303133">未保持完好有效</div>
<div class="rt" style="left:1110px;top:346px;color:#303133">4、安全通道、出口畅通性<i class="cl">:</i></div>
<div class="cb" style="left:1156px;top:380px;width:16px;height:16px"></div>
<div class="rt" style="left:1180px;top:378px;color:#303133">占用</div>
<div class="cb" style="left:1397px;top:380px;width:16px;height:16px"></div>
<div class="rt" style="left:1421px;top:378px;color:#303133">堵塞</div>
<div class="cb" style="left:1638px;top:380px;width:16px;height:16px"></div>
<div class="rt" style="left:1662px;top:378px;color:#303133">封闭</div>
<div class="rt" style="left:1110px;top:410px;color:#303133">5、消防车通道畅通性<i class="cl">:</i></div>
<div class="cb" style="left:1156px;top:444px;width:16px;height:16px"></div>
<div class="rt" style="left:1180px;top:442px;color:#303133">占用</div>
<div class="cb" style="left:1397px;top:444px;width:16px;height:16px"></div>
<div class="rt" style="left:1421px;top:442px;color:#303133">堵塞</div>
<div class="cb" style="left:1638px;top:444px;width:16px;height:16px"></div>
<div class="rt" style="left:1662px;top:442px;color:#303133">封闭</div>
<div class="rt" style="left:1110px;top:474px;color:#303133">6、电器/燃气用具的安装、使用及其线路、管路的设计、敷设、维护保养、检车不符合消防技术标准和管理规定。</div>
<div class="cb" style="left:1156px;top:508px;width:16px;height:16px"></div>
<div class="rt" style="left:1180px;top:506px;color:#303133">电器</div>
<div class="cb" style="left:1397px;top:508px;width:16px;height:16px"></div>
<div class="rt" style="left:1421px;top:506px;color:#303133">燃气</div>
<div class="cb" style="left:1110px;top:540px;width:16px;height:16px"></div>
<div class="rt" style="left:1134px;top:538px;color:#303133">7、已改变建筑使用性质和用途</div>
<div class="cb" style="left:1110px;top:572px;width:16px;height:16px"></div>
<div class="rt" style="left:1134px;top:570px;color:#303133">8、存放有易燃危险物品</div>
<div class="cb" style="left:1110px;top:604px;width:16px;height:16px"></div>
<div class="rt" style="left:1134px;top:602px;color:#303133">9、停用消防设施设备</div>
<div class="cb" style="left:1110px;top:636px;width:16px;height:16px"></div>
<div class="rt" style="left:1134px;top:634px;color:#303133">10、违规施工明火作业</div>
<div class="cb" style="left:1110px;top:668px;width:16px;height:16px"></div>
<div class="rt" style="left:1134px;top:666px;color:#303133">11、存在“三合一”现象</div>
<div class="cb" style="left:1110px;top:700px;width:16px;height:16px"></div>
<div class="rt" style="left:1134px;top:698px;color:#303133">12、存在电动自行车违规停放充电</div>
<div class="rt" style="left:1110px;top:730px;color:#303133">13、埋压、圈占、遮挡消防设施<i class="cl">:</i></div>
<div class="cb" style="left:1156px;top:764px;width:16px;height:16px"></div>
<div class="rt" style="left:1180px;top:762px;color:#303133">埋压</div>
<div class="cb" style="left:1397px;top:764px;width:16px;height:16px"></div>
<div class="rt" style="left:1421px;top:762px;color:#303133">圈占</div>
<div class="cb" style="left:1638px;top:764px;width:16px;height:16px"></div>
<div class="rt" style="left:1662px;top:762px;color:#303133">遮挡消防设施</div>
<div class="cb" style="left:1110px;top:796px;width:16px;height:16px"></div>
<div class="rt" style="left:1134px;top:794px;color:#303133">14、违规使用液化气钢瓶</div>
<div class="cb" style="left:1110px;top:828px;width:16px;height:16px"></div>
<div class="rt" style="left:1134px;top:826px;color:#303133">15、擅自搭建阁楼和设置床铺</div>
<div class="cb" style="left:1110px;top:860px;width:16px;height:16px"></div>
<div class="rt" style="left:1134px;top:858px;color:#303133">16、擅自采用可燃材料搭建临时建筑</div>
<div class="cb" style="left:1110px;top:892px;width:16px;height:16px"></div>
<div class="rt" style="left:1134px;top:890px;color:#303133">17、电动自行车充电场所简易喷淋和智能充电桩</div>
</div>
</body></html>
